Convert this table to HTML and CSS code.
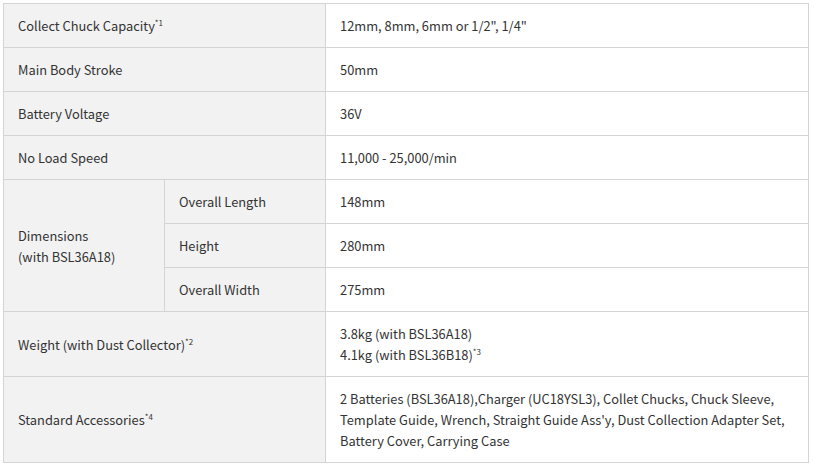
FILE: index.html
```html
<!DOCTYPE html>
<html>
<head>
<meta charset="utf-8">
<link rel="stylesheet" href="styles.css">
</head>
<body>
<table class="spec">
  <colgroup>
    <col class="c1"><col class="c2"><col class="c3">
  </colgroup>
  <tr><th colspan="2">Collect Chuck Capacity<sup>*1</sup></th><td>12mm, 8mm, 6mm or 1/2", 1/4"</td></tr>
  <tr><th colspan="2">Main Body Stroke</th><td>50mm</td></tr>
  <tr><th colspan="2">Battery Voltage</th><td>36V</td></tr>
  <tr><th colspan="2">No Load Speed</th><td>11,000 - 25,000/min</td></tr>
  <tr><th rowspan="3">Dimensions<br>(with BSL36A18)</th><th>Overall Length</th><td>148mm</td></tr>
  <tr><th>Height</th><td>280mm</td></tr>
  <tr><th>Overall Width</th><td>275mm</td></tr>
  <tr><th colspan="2">Weight (with Dust Collector)<sup>*2</sup></th><td>3.8kg (with BSL36A18)<br>4.1kg (with BSL36B18)<sup>*3</sup></td></tr>
  <tr><th colspan="2">Standard Accessories<sup>*4</sup></th><td>2 Batteries (BSL36A18),Charger (UC18YSL3), Collet Chucks, Chuck Sleeve,<br>Template Guide, Wrench, Straight Guide Ass'y, Dust Collection Adapter Set,<br>Battery Cover, Carrying Case</td></tr>
</table>
</body>
</html>
```
FILE: styles.css
```css
html, body {
  margin: 0;
  padding: 0;
  background: #fff;
}
body {
  padding: 3px 0 0 3px;
  font-family: "Noto Sans CJK JP", "Source Sans Pro", "Noto Sans", sans-serif;
  font-size: 12.85px;
  line-height: 21px;
  color: #333;
}
.spec {
  border-collapse: collapse;
  width: 805px;
  table-layout: fixed;
}
.c1 { width: 161px; }
.c2 { width: 161px; }
.c3 { width: 483px; }
.spec th, .spec td {
  border: 1px solid #d4d4d4;
  padding: 11px 14px;
  text-align: left;
  vertical-align: middle;
  font-weight: normal;
}
.spec th {
  background: #f2f2f2;
}
.spec td {
  background: #fff;
}
sup {
  font-size: 8px;
  line-height: 0;
  vertical-align: 5px;
}
```
